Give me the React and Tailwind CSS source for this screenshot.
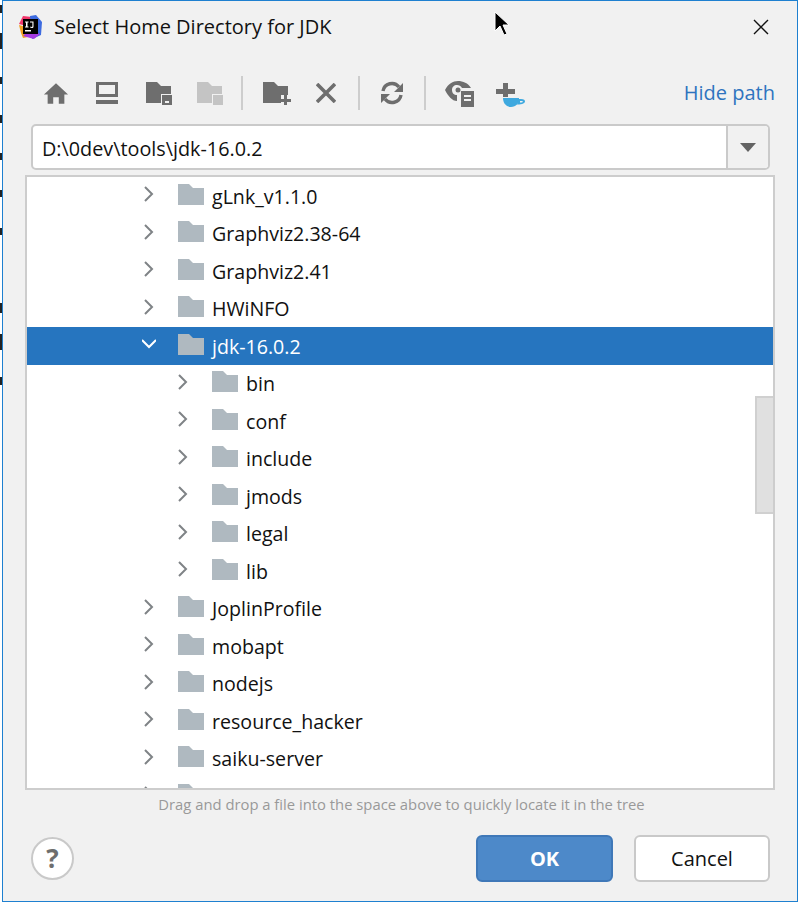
import React from 'react';

const FONT = "font-['Open_Sans','Noto_Sans',sans-serif]";

const topRows = [
  { name: 'gLnk_v1.1.0' },
  { name: 'Graphviz2.38-64' },
  { name: 'Graphviz2.41' },
  { name: 'HWiNFO' },
  { name: 'jdk-16.0.2', selected: true, open: true },
  { name: 'bin', child: true },
  { name: 'conf', child: true },
  { name: 'include', child: true },
  { name: 'jmods', child: true },
  { name: 'legal', child: true },
  { name: 'lib', child: true },
  { name: 'JoplinProfile' },
  { name: 'mobapt' },
  { name: 'nodejs' },
  { name: 'resource_hacker' },
  { name: 'saiku-server' },
  { name: 'screenshotfinder' },
];

// dark slivers of the window behind the dialog
const behind = [
  { top: 'top-[5px]', h: 'h-[8px]' },
  { top: 'top-[33px]', h: 'h-[16px]' },
  { top: 'top-[77px]', h: 'h-[7px]' },
  { top: 'top-[115px]', h: 'h-[8px]' },
  { top: 'top-[153px]', h: 'h-[7px]' },
  { top: 'top-[190px]', h: 'h-[7px]' },
  { top: 'top-[228px]', h: 'h-[7px]' },
  { top: 'top-[303px]', h: 'h-[10px]' },
  { top: 'top-[334px]', h: 'h-[16px]' },
  { top: 'top-[377px]', h: 'h-[8px]' },
];

const Logo = () => (
  <svg width="24" height="24" viewBox="0 0 24 24">
    <path d="M1 9 L5 1 L14 2 L12 12 Z" fill="#f0366b" />
    <path d="M3 18 L1 10 L8 12 L10 22 L5 23 Z" fill="#f0a020" />
    <path d="M12 1 L18 0 L24 7 L23 20 L14 24 Z" fill="#3d6be0" />
    <path d="M5 21 L16 24 L22 19 L12 14 Z" fill="#a43be0" />
    <rect x="5" y="4" width="15" height="15" fill="#000" />
    <rect x="7" y="15" width="6" height="1.5" fill="#fff" />
    <path d="M7 6.500h3.500v1h-1v4h1v1H7v-1h1v-4H7z M12 6.500h3.500v5c0 1-.6 1.500-1.700 1.500-.8 0-1.400-.3-1.800-.8l.7-.7c.3.3.6.5 1 .5s.7-.2.7-.7v-3.800H12z" fill="#fff" />
  </svg>
);

const Folder = ({ className = 'w-[26px] h-[21px] mb-[3px]', fill = '#afb9c0' }) => (
  <svg className={className} viewBox="0 0 26 21">
    <path d="M0 0h11l4 4h11v17H0z" fill={fill} />
  </svg>
);

const Chevron = ({ open, selected }) => (
  <svg width="14" height="16" viewBox="0 0 14 16" fill="none" stroke={selected ? '#fff' : '#7f8386'} strokeWidth="2">
    {open ? <path d="M0 4l7 7 7-7" /> : <path d="M3 1l7 7-7 7" />}
  </svg>
);

const Toolbar = () => (
  <div className="flex items-center h-[36px] ml-[40px] mr-[22px] mt-[22px]">
    <svg width="26" height="23" viewBox="0 0 28 24" fill="#6e6e6e"><path d="M14 1L1 13h4v10h6v-7h6v7h6V13h4z" /></svg>
    <svg className="ml-[26px]" width="24" height="24" viewBox="0 0 24 24" fill="#6e6e6e"><path fillRule="evenodd" d="M1 1h22v15H1zM4 4v9h16V4zM1 19h22v4H1z" /></svg>
    <svg className="ml-[27px]" width="26" height="24" viewBox="0 0 26 24" fill="#6e6e6e"><path d="M0 1h11l4 4h10v8h-10v9H0z" /><path fillRule="evenodd" d="M16 14h10v10H16zM19 20v2h4v-2z" /></svg>
    <svg className="ml-[25px]" width="26" height="24" viewBox="0 0 26 24" fill="#c4c4c4"><path d="M0 1h11l4 4h10v8h-10v9H0z" /><path d="M16 14h10v10H16z" /></svg>
    <div className="ml-[18px] w-[2px] h-[34px] bg-[#cdcdcd]" />
    <svg className="ml-[20px]" width="28" height="24" viewBox="0 0 28 24" fill="#6e6e6e"><path d="M0 1h11l4 4h10v9h-7v8H0z" /><path d="M21 14h3v4h4v3h-4v4h-3v-4h-4v-3h4z" /></svg>
    <svg className="ml-[25px]" width="20" height="20" viewBox="0 0 20 20" stroke="#6e6e6e" strokeWidth="3.600" fill="none"><path d="M1 1l18 18M19 1L1 19" /></svg>
    <div className="ml-[22px] w-[2px] h-[34px] bg-[#cdcdcd]" />
    <svg className="ml-[20px]" width="24" height="24" viewBox="0 0 24 24" fill="none" stroke="#6e6e6e" strokeWidth="3.400">
      <path d="M3 10A9 9 0 0 1 19 6" />
      <path d="M21 14A9 9 0 0 1 5 18" />
      <path d="M23 2v9h-9z M1 22v-9h9z" fill="#6e6e6e" stroke="none" />
    </svg>
    <div className="ml-[20px] w-[2px] h-[34px] bg-[#cdcdcd]" />
    <svg className="ml-[19px]" width="29" height="27" viewBox="0 0 29 27">
      <path fillRule="evenodd" d="M0 10C3 4 8 1 13 1c5 0 10 2 13 7h-9c-1-2-3-3-5-3-3 0-5 2-5 5s2 5 5 5v6C7 21 3 16 0 10z" fill="#6e6e6e" />
      <circle cx="13" cy="10" r="2.500" fill="#6e6e6e" />
      <path fillRule="evenodd" d="M16 11h13v16H16zM19 15v2h7v-2zM19 19v2h7v-2z" fill="#6e6e6e" />
    </svg>
    <svg className="ml-[22px]" width="29" height="28" viewBox="0 0 29 28">
      <path d="M7 4h5v6h7v5h-7v3H7v-3H0v-5h7z" fill="#6e6e6e" />
      <path d="M7 19h16c0 5-3 9-8 9s-8-4-8-9z" fill="#3fa9df" />
      <path fillRule="evenodd" d="M22 20h3c3 0 4 1 4 2.500s-2 3-8 3zM24 22v1.500c2 0 3-.3 3-.8s-1-.8-3-.7z" fill="#3fa9df" />
    </svg>
    <span className="ml-auto text-[20px] leading-none text-[#2e74bf] pb-[1px]">Hide path</span>
  </div>
);

const PathField = () => (
  <div className="flex h-[46px] mt-[13px] ml-[28px] mr-[27px] bg-white border-2 border-[#cacaca] rounded-[5px]">
    <div className="flex-1 flex items-center pl-[9px] pt-[3px] text-[19.800px] text-[#111]">D:\0dev\tools\jdk-16.0.2</div>
    <div className="w-[42px] flex items-center justify-center border-l-2 border-[#cacaca] bg-[#f1f1f1] rounded-r-[4px]">
      <div className="w-0 h-0 border-l-[8px] border-r-[8px] border-t-[9px] border-l-transparent border-r-transparent border-t-[#636363]" />
    </div>
  </div>
);

const Row = ({ name, child, selected, open }) => (
  <div className={`flex items-center h-[37.5px] shrink-0 ${selected ? 'bg-[#2675bf] text-white' : 'text-[#111]'}`}>
    <div className={`${child ? 'ml-[149px]' : 'ml-[115px]'} w-[36px] mb-[3px] flex items-center`}>
      <Chevron open={open} selected={selected} />
    </div>
    <Folder />
    <span className="ml-[8px] pt-[2px] text-[19.600px] leading-none">{name}</span>
  </div>
);

const Tree = () => (
  <div className="relative h-[615px] mt-[5px] ml-[22px] mr-[22px] bg-white border-2 border-[#cdcdcd] overflow-hidden">
    <div className="flex flex-col">
      {topRows.map((r) => (
        <Row key={r.name} {...r} />
      ))}
    </div>
    <div className="absolute right-0 top-[219px] w-[18px] h-[118px] bg-[#e0e0e0] border-2 border-r-0 border-[#d0d0d0]" />
  </div>
);

const Footer = () => (
  <div className="flex items-center mt-[23px] ml-[28px] mr-[27px]">
    <div className="w-[43px] h-[43px] rounded-full bg-white border-2 border-[#c9c9c9] flex items-center justify-center text-[26px] font-bold text-[#6e6e6e] leading-none">?</div>
    <button className="ml-auto w-[137px] h-[47px] pt-[1px] rounded-[6px] bg-[#4d89c9] border-2 border-[#3f78b8] text-white font-bold text-[20px]">OK</button>
    <button className="ml-[21px] w-[136px] h-[47px] pt-[1px] rounded-[6px] bg-white border-2 border-[#c9c9c9] text-[#111] text-[20px]">Cancel</button>
  </div>
);

export default function App() {
  return (
    <div className={`relative w-[798px] h-[902px] overflow-hidden bg-white ${FONT}`}>
      {behind.map((b) => (
        <div key={b.top} className={`absolute left-0 w-[2px] bg-[#222] ${b.top} ${b.h}`} />
      ))}

      <div className="absolute left-[2px] top-0 right-0 bottom-0 border border-[#1e80d0] bg-[#f1f1f1]">
        <div className="flex items-center h-[52px] pl-[15px] pr-[28px]">
          <Logo />
          <span className="ml-[12px] text-[20px] leading-none text-[#111]">Select Home Directory for JDK</span>
          <svg className="ml-auto" width="16" height="16" viewBox="0 0 16 16" stroke="#111" strokeWidth="1.400" fill="none"><path d="M1 1l14 14M15 1L1 15" /></svg>
        </div>
        <Toolbar />
        <PathField />
        <Tree />
        <div className="text-[14.800px] leading-none text-[#999] text-center mt-[7px] pl-[3px]">
          Drag and drop a file into the space above to quickly locate it in the tree
        </div>
        <Footer />
      </div>

      {/* mouse pointer */}
      <svg className="absolute left-[494px] top-[11px]" width="16" height="25" viewBox="0 0 16 25">
        <path d="M1 1v19l5-5 4 9 3-1-4-9h6z" fill="#000" stroke="#fff" strokeWidth="1" />
      </svg>
    </div>
  );
}
